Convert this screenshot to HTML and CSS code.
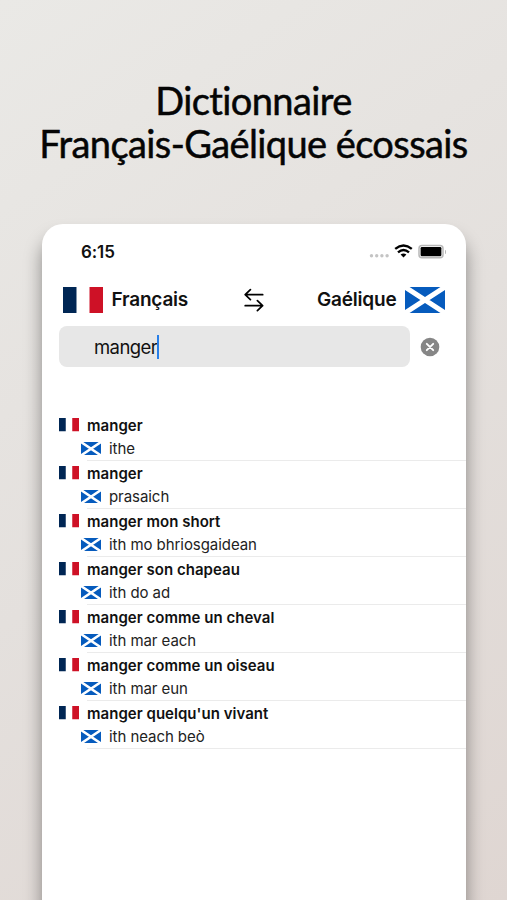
FILE: index.html
```html
<!DOCTYPE html>
<html lang="fr">
<head>
<meta charset="utf-8">
<title>Dictionnaire Français-Gaélique écossais</title>
<link rel="stylesheet" href="styles.css">
</head>
<body>
<svg class="defs" width="0" height="0" aria-hidden="true">
  <symbol id="fr" viewBox="0 0 40 26" preserveAspectRatio="none">
    <path fill="#fff" d="M0 0h40v26H0z"/><path fill="#002654" d="M0 0h13.5v26H0z"/><path fill="#ce1126" d="M26.5 0H40v26H26.5z"/>
  </symbol>
  <symbol id="sc" viewBox="0 0 40 26" preserveAspectRatio="none">
    <path fill="#065bbd" d="M0 0h40v26H0z"/><path stroke="#fff" stroke-width="5" d="M0 0l40 26M40 0L0 26"/>
  </symbol>
</svg>
<h1 class="headline"><span class="line-one">Dictionnaire</span><span class="line-two">Français-Gaélique écossais</span></h1>
<main class="phone">
  <div class="status">
    <span class="time">6:15</span>
    <svg class="status-icons" width="76" height="16" viewBox="0 0 76 16">
      <g fill="#c4c4c4"><circle cx="3.5" cy="11.8" r="1.7"/><circle cx="8.7" cy="11.8" r="1.7"/><circle cx="13.9" cy="11.8" r="1.7"/><circle cx="19.1" cy="11.8" r="1.7"/></g>
      <g fill="none" stroke="#000" stroke-width="2.4"><path d="M27.2 4.9Q35.5 -1.9 43.8 4.9"/><path d="M30 8.3Q35.5 3.7 41 8.3"/></g>
      <path d="M32.6 10.6Q35.5 8.3 38.4 10.6L35.5 13.6z"/>
      <rect x="51" y="1.4" width="24" height="12.4" rx="3" fill="none" stroke="#b8b8b8" stroke-width="1.5"/>
      <rect x="52.6" y="3" width="20.8" height="9.2" rx="1.3"/>
    </svg>
    <i class="battery-tip"></i>
  </div>
  <div class="languages">
    <svg class="flag-large"><use href="#fr"/></svg>
    <span class="lang source">Français</span>
    <svg class="swap" width="20" height="24" viewBox="0 0 20 24" fill="none" stroke="#000" stroke-width="1.7" stroke-linecap="round" stroke-linejoin="round">
      <path d="M18.7 6.7H1.4M6.4 1.7L1.2 6.7l5.2 5M1.2 17.7h17.3M13.4 12.7l5.2 5-5.2 5"/>
    </svg>
    <span class="lang target">Gaélique</span>
    <svg class="flag-large"><use href="#sc"/></svg>
  </div>
  <div class="search">
    <div class="field"><span class="query">manger</span><i class="caret"></i></div>
    <svg class="clear" width="20" height="20" viewBox="0 0 20 20"><circle cx="10" cy="10" r="9.3" fill="#868686"/><path d="M6.8 6.8l6.4 6.4M13.2 6.8l-6.4 6.4" stroke="#fff" stroke-width="1.9" stroke-linecap="round"/></svg>
  </div>
  <ul class="results">
    <li><div class="word"><svg><use href="#fr"/></svg><b>manger</b></div><div class="translation"><svg><use href="#sc"/></svg><span>ithe</span></div></li>
    <li><div class="word"><svg><use href="#fr"/></svg><b>manger</b></div><div class="translation"><svg><use href="#sc"/></svg><span>prasaich</span></div></li>
    <li><div class="word"><svg><use href="#fr"/></svg><b>manger mon short</b></div><div class="translation"><svg><use href="#sc"/></svg><span>ith mo bhriosgaidean</span></div></li>
    <li><div class="word"><svg><use href="#fr"/></svg><b>manger son chapeau</b></div><div class="translation"><svg><use href="#sc"/></svg><span>ith do ad</span></div></li>
    <li><div class="word"><svg><use href="#fr"/></svg><b>manger comme un cheval</b></div><div class="translation"><svg><use href="#sc"/></svg><span>ith mar each</span></div></li>
    <li><div class="word"><svg><use href="#fr"/></svg><b>manger comme un oiseau</b></div><div class="translation"><svg><use href="#sc"/></svg><span>ith mar eun</span></div></li>
    <li><div class="word"><svg><use href="#fr"/></svg><b>manger quelqu'un vivant</b></div><div class="translation"><svg><use href="#sc"/></svg><span>ith neach beò</span></div></li>
  </ul>
</main>
</body>
</html>
```

FILE: styles.css
```css
* { box-sizing: border-box; }
body {
  margin: 0;
  height: 900px;
  overflow: hidden;
  display: flex;
  flex-direction: column;
  background: linear-gradient(145deg, #eae9e6 0%, #e4e0dd 50%, #dfd6d2 100%);
  font-family: Inter, "Liberation Sans", sans-serif;
  color: #111;
}
.defs { position: absolute; }
.headline {
  margin: 0;
  padding-top: 79px;
  height: 224px;
  flex: none;
  display: flex;
  flex-direction: column;
  align-items: center;
  font: 400 38px/43px Lato, sans-serif;
  color: #050505;
  white-space: nowrap;
  -webkit-text-stroke: .5px #050505;
}
.line-one { letter-spacing: -.6px; }
.line-two { letter-spacing: -.6px; }
.phone {
  width: 424px;
  height: 700px;
  flex: none;
  margin-left: 42px;
  border-radius: 21px 21px 0 0;
  background: #fff;
  box-shadow: 0 14px 18px rgba(0,0,0,.4);
}
.status {
  height: 55px;
  padding: 0 20px 0 39px;
  display: flex;
  align-items: center;
}
.time { font-size: 17px; font-weight: 600; letter-spacing: -.1px; }
.status-icons { margin-left: auto; }
.battery-tip { width: 1.5px; height: 4px; margin-left: .5px; background: #b8b8b8; border-radius: 0 2px 2px 0; }
.languages {
  height: 41px;
  padding: 0 21px;
  display: flex;
  align-items: center;
}
.flag-large { width: 40px; height: 26px; flex: none; }
.lang { font-size: 19px; font-weight: 600; letter-spacing: -.2px; }
.source { width: 132.5px; margin-left: 8.5px; }
.swap { flex: none; }
.target { margin-left: auto; margin-right: 8.5px; }
.search { display: flex; align-items: center; margin: 6px 0 0 17px; }
.field {
  width: 351px;
  height: 41px;
  padding-left: 35px;
  display: flex;
  align-items: center;
  border-radius: 8px;
  background: #e7e7e7;
}
.query { font-size: 18.5px; letter-spacing: -.6px; }
.caret { width: 2px; height: 24px; background: #287fe8; }
.clear { margin-left: 9.5px; }
.results { list-style: none; margin: 46px 0 0; padding: 0; }
li { height: 48px; font-size: 15px; line-height: 24px; white-space: nowrap; }
.word, .translation { height: 24px; display: flex; align-items: center; }
.word { padding-left: 16.5px; gap: 8.5px; }
.word b { font-weight: 600; padding-top: 1px; letter-spacing: .03px; }
.translation {
  margin-left: 45px;
  gap: 8.5px;
  border-bottom: 1px solid #ebebeb;
  color: #222;
}
.translation span { padding-top: 1px; letter-spacing: -.06px; }
.translation svg { margin-left: -6.5px; }
li svg { width: 20px; height: 13.5px; flex: none; }
```
